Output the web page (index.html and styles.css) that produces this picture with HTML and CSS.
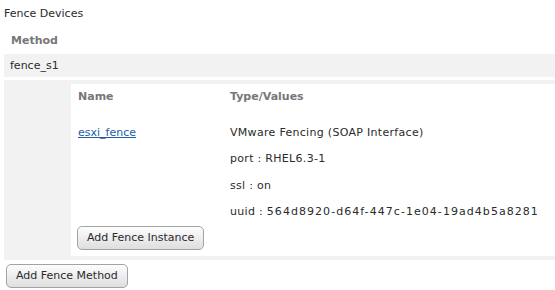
FILE: index.html
```html
<!DOCTYPE html>
<html lang="en">
<head>
	<meta charset="UTF-8">
	<title>Fence Devices</title>
	<link rel="stylesheet" href="styles.css">
</head>
<body>
	<div class="section-title">Fence Devices</div>

	<div class="methods">
		<div class="methods-head">Method</div>
		<div class="method-row">fence_s1</div>

		<!-- instances for fence_s1 -->
		<div class="method-body">
			<div class="instances">
				<div class="instances-head">
					<div class="col-name">Name</div>
					<div class="col-type">Type/Values</div>
				</div>
				<div class="instance">
					<div class="col-name"><a href="#">esxi_fence</a></div>
					<div class="col-type">
						<div class="value">VMware Fencing (SOAP Interface)</div>
						<div class="value">port : RHEL6.3-1</div>
						<div class="value">ssl : on</div>
						<div class="value">uuid : <span class="uuid">564d8920-d64f-447c-1e04-19ad4b5a8281</span></div>
					</div>
				</div>
				<button class="btn btn-instance">Add Fence Instance</button>
			</div>
		</div>
	</div>

	<button class="btn btn-method">Add Fence Method</button>
</body>
</html>
```

FILE: styles.css
```css
/* base */
body {
	margin: 0;
	padding: 7px 0 0 4px;
	font-family: "DejaVu Sans", Verdana, sans-serif;
	font-size: 11px;
	line-height: 13px;
	color: #2b2b2b;
	background: #fff;
}

.section-title {
	margin-bottom: 8px;
}

/* method list */
.methods-head {
	padding: 6px 7px 7px;
	font-weight: bold;
	color: #777;
}
.method-row {
	padding: 5px 6px;
	background: #f2f2f2;
}
.method-body {
	margin-top: 3px;
	padding: 4px 0 4px 67px;
	background: #f2f2f2;
}

/* instances */
.instances {
	background: #fff;
	padding: 6px 0 6px;
}
.instances-head,
.instance {
	display: flex;
}
.instances-head {
	font-weight: bold;
	color: #777;
	padding-bottom: 23px;
}
.col-name {
	width: 152px;
	padding-left: 7px;
}
.col-type {
	flex: 1;
}
.col-name a {
	color: #1a5ea8;
}
.value {
	height: 13px;
	margin-bottom: 13.3px;
	letter-spacing: 0.3px;
}
.value:last-child {
	margin-bottom: 0;
}
/* wide digits and dashes, as in the original font */
.uuid {
	letter-spacing: 1.05px;
}

/* buttons */
.btn {
	display: block;
	height: 24px;
	padding: 0 9px;
	font-family: "DejaVu Sans", Verdana, sans-serif;
	font-size: 11px;
	color: #2b2b2b;
	border: 1px solid #a3a3a3;
	border-radius: 5px;
	background: linear-gradient(#fdfdfd, #dedede);
}
.btn-instance {
	margin: 8px 0 0 6px;
}
.btn-method {
	margin: 4px 0 0 2px;
}
```
